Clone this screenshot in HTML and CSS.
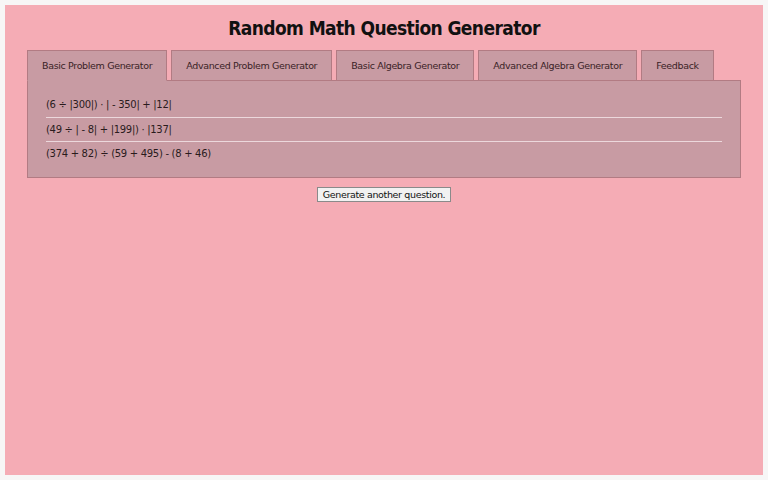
FILE: index.html
```html
<!DOCTYPE html>
<html>
<head>
<meta charset="utf-8">
<title>Random Math Question Generator</title>
<link rel="stylesheet" href="styles.css">
</head>
<body>
<div class="page">
  <h1 class="title">Random Math Question Generator</h1>
  <div class="tabs">
    <div class="tab active">Basic Problem Generator</div>
    <div class="tab">Advanced Problem Generator</div>
    <div class="tab">Basic Algebra Generator</div>
    <div class="tab">Advanced Algebra Generator</div>
    <div class="tab">Feedback</div>
  </div>
  <div class="panel">
    <div class="row">(6 ÷ |300|) · | - 350| + |12|</div>
    <div class="row">(49 ÷ | - 8| + |199|) · |137|</div>
    <div class="row">(374 + 82) ÷ (59 + 495) - (8 + 46)</div>
  </div>
  <div class="actions">
    <button class="btn">Generate another question.</button>
  </div>
</div>
</body>
</html>
```
FILE: styles.css
```css
html, body {
  margin: 0;
  padding: 0;
}
body {
  background: #f7f6f6;
  padding: 5px;
  font-family: "DejaVu Sans", Verdana, sans-serif;
  color: #111;
}
.page {
  background: #f5acb5;
  height: 470px;
  width: 758px;
  padding: 0 22px;
  box-sizing: border-box;
}
.title {
  margin: 0;
  padding-top: 11px;
  height: 45px;
  box-sizing: border-box;
  text-align: center;
  font-family: "DejaVu Sans Condensed", "DejaVu Sans", sans-serif;
  font-size: 19px;
  letter-spacing: -0.6px;
  font-weight: bold;
  line-height: 24px;
}
.tabs {
  display: flex;
  gap: 4px;
  position: relative;
  z-index: 1;
  margin-bottom: -1px;
}
.tab {
  flex: none;
  white-space: nowrap;
  height: 31px;
  box-sizing: border-box;
  padding: 0 14px;
  background: #c89ba3;
  border: 1px solid #b27b83;
  font-size: 9.5px;
  letter-spacing: -0.35px;
  line-height: 29px;
  color: #3a2226;
}
.tab.active {
  border-bottom-color: #c89ba3;
}
.panel {
  background: #c89ba3;
  border: 1px solid #b27b83;
  padding: 12px 18px 12px;
}
.row {
  font-size: 10px;
  letter-spacing: -0.3px;
  line-height: 23px;
  color: #2a1b1d;
  border-bottom: 1px solid #ecd8dc;
}
.row:first-child {
  line-height: 24px;
}
.row:last-child {
  border-bottom: none;
}
.actions {
  text-align: center;
  padding-top: 5px;
}
.btn {
  font-family: "DejaVu Sans", Verdana, sans-serif;
  font-size: 9.5px;
  letter-spacing: -0.35px;
  padding: 1px 5px;
  background: #f2f1f1;
  border: 1px solid #8a8a8a;
  color: #111;
  line-height: 11px;
}
```
